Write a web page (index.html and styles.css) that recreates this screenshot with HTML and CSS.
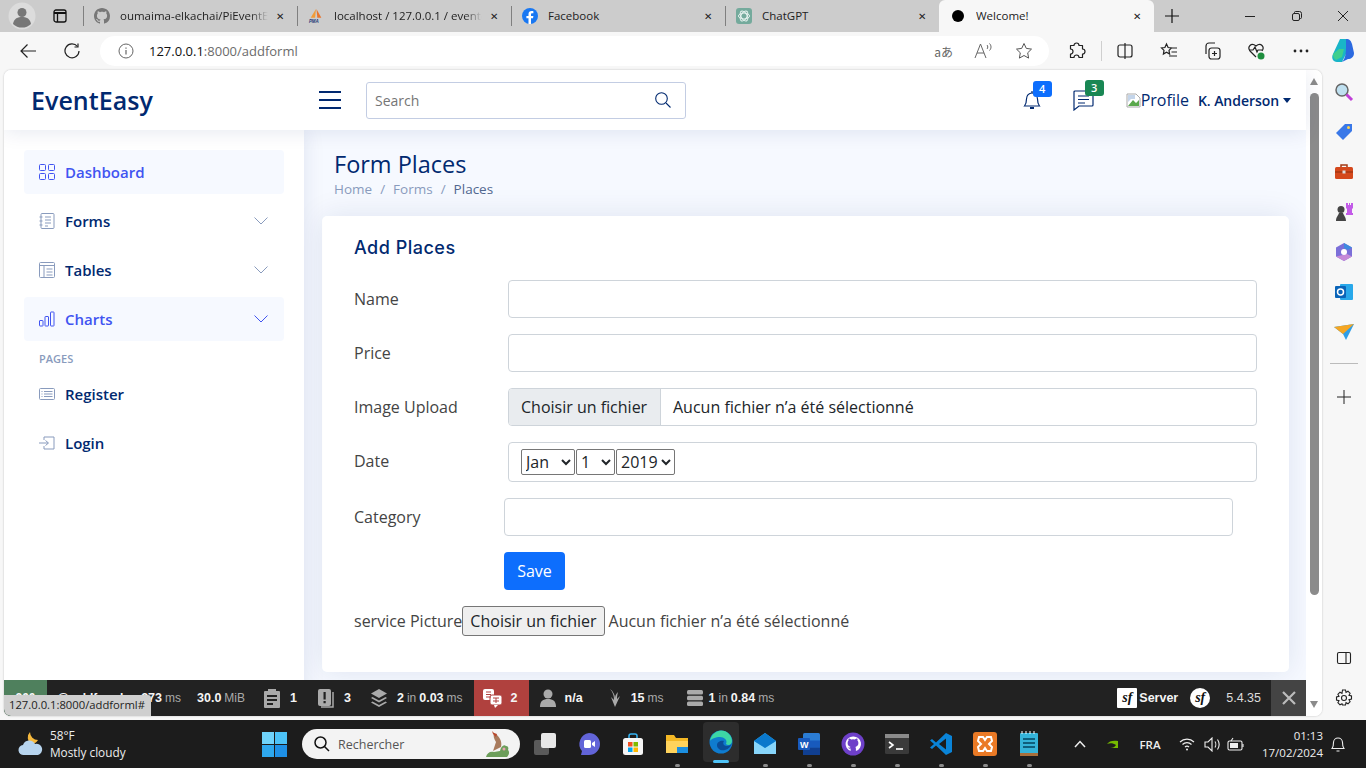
FILE: index.html
```html
<!DOCTYPE html>
<html lang="fr">
<head>
  <meta charset="UTF-8" />
  <meta name="viewport" content="width=device-width, initial-scale=1.0" />
  <title>Welcome!</title>
  <link rel="stylesheet" href="styles.css">
</head>
<body>

  <!-- barre des onglets -->
  <div class="tabstrip">
    <div class="tab-lead">
      <span class="avatar">
        <svg width="28" height="28" viewBox="0 0 28 28"><circle cx="14" cy="14" r="13.5" fill="#dcdcdc"/><circle cx="14" cy="10.5" r="4.5" fill="#777"/><path d="M5 22c1-6 5-7 9-7s8 1 9 7a13 13 0 0 1-18 0z" fill="#777"/></svg>
      </span>
      <svg class="workspace" width="16" height="16" viewBox="0 0 16 16" fill="none" stroke="#111" stroke-width="1.3"><rect x="2" y="2" width="12" height="12" rx="2"/><path d="M2 5h12" stroke-width="2"/><path d="M5.500 5v9"/></svg>
    </div>
    <div class="tab">
      <svg class="favicon" width="16" height="16" viewBox="0 0 16 16"><path fill="#777" d="M8 0C3.580 0 0 3.580 0 8c0 3.540 2.290 6.530 5.470 7.590.4.070.55-.17.55-.38 0-.19-.01-.82-.01-1.490-2.010.37-2.530-.49-2.690-.94-.09-.23-.48-.94-.82-1.130-.28-.15-.68-.52-.01-.53.63-.01 1.080.58 1.230.82.720 1.210 1.870.87 2.330.66.070-.52.280-.87.510-1.070-1.780-.2-3.640-.89-3.640-3.950 0-.87.310-1.590.820-2.150-.08-.2-.36-1.020.08-2.120 0 0 .670-.21 2.200.82.640-.18 1.320-.27 2-.27s1.360.09 2 .27c1.530-1.040 2.200-.82 2.200-.82.440 1.100.160 1.920.080 2.120.510.560.820 1.270.820 2.150 0 3.070-1.870 3.750-3.650 3.950.290.250.540.730.540 1.480 0 1.070-.01 1.930-.01 2.200 0 .210.150.460.550.380A8.010 8.010 0 0 0 16 8c0-4.420-3.580-8-8-8z"/></svg>
      <span class="tab-title fade">oumaima-elkachai/PiEventEa</span>
      <span class="tab-close">✕</span>
    </div>
    <div class="tab">
      <svg class="favicon" width="18" height="16" viewBox="0 0 18 16"><path d="M9 0L3 10h5z" fill="#f29b38"/><path d="M9.500 0L15 10h-4.500z" fill="#e8742c"/><text x="1" y="15.500" class="pma-text">PMA</text></svg>
      <span class="tab-title fade">localhost / 127.0.0.1 / evente</span>
      <span class="tab-close">✕</span>
    </div>
    <div class="tab">
      <svg class="favicon" width="16" height="16" viewBox="0 0 16 16"><circle cx="8" cy="8" r="8" fill="#1877f2"/><path d="M11 10.300l.4-2.300H9V6.500c0-.700.300-1.200 1.300-1.200h1.100V3.300S10.500 3.100 9.600 3.100C7.700 3.100 6.500 4.300 6.500 6.300V8H4.400v2.300h2.100V16h2.500v-5.700z" fill="#fff"/></svg>
      <span class="tab-title">Facebook</span>
      <span class="tab-close">✕</span>
    </div>
    <div class="tab">
      <svg class="favicon" width="16" height="16" viewBox="0 0 16 16"><rect width="16" height="16" rx="3" fill="#74aa9c"/><g fill="none" stroke="#e8f3f0" stroke-width="1"><ellipse cx="8" cy="8" rx="5.500" ry="3"/><ellipse cx="8" cy="8" rx="5.500" ry="3" transform="rotate(60 8 8)"/><ellipse cx="8" cy="8" rx="5.500" ry="3" transform="rotate(120 8 8)"/></g></svg>
      <span class="tab-title">ChatGPT</span>
      <span class="tab-close">✕</span>
    </div>
    <div class="tab tab-active">
      <span class="black-dot"></span>
      <span class="tab-title">Welcome!</span>
      <span class="tab-close">✕</span>
    </div>
    <span class="new-tab">
      <svg width="14" height="14" viewBox="0 0 14 14" stroke="#111" stroke-width="1.200"><path d="M7 0v14M0 7h14"/></svg>
    </span>
    <div class="win-controls">
      <svg width="10" height="10" viewBox="0 0 10 10" stroke="#222"><path d="M0 5.500h10"/></svg>
      <svg width="10" height="10" viewBox="0 0 10 10" fill="none" stroke="#222"><rect x=".5" y="2.500" width="7" height="7" rx="1.500"/><path d="M2.500 2V1.500a1 1 0 0 1 1-1h4a2 2 0 0 1 2 2v4a1 1 0 0 1-1 1H8"/></svg>
      <svg width="10" height="10" viewBox="0 0 10 10" stroke="#222"><path d="M0 0l10 10M10 0L0 10"/></svg>
    </div>
  </div>

  <!-- barre d'adresse -->
  <div class="toolbar">
    <span class="tool-slot">
      <svg width="16" height="16" viewBox="0 0 16 16" fill="none" stroke="#222" stroke-width="1.200"><path d="M16 8H1M7.500 1.500L1 8l6.500 6.500"/></svg>
    </span>
    <span class="tool-slot">
      <svg width="16" height="16" viewBox="0 0 16 16" fill="none" stroke="#222" stroke-width="1.200"><path d="M13.500 3.500A7 7 0 1 0 15 8"/><path d="M14 .5v3.500h-3.500"/></svg>
    </span>
    <div class="urlbar">
      <svg width="16" height="16" viewBox="0 0 16 16" fill="none" stroke="#666"><circle cx="8" cy="8" r="7"/><path d="M8 7v4.500M8 4.500v1.200" stroke-width="1.200"/></svg>
      <span class="url"><b>127.0.0.1</b>:8000/addforml</span>
      <span class="url-icons">
        <span class="url-translate">aあ</span>
        <svg width="20" height="18" viewBox="0 0 20 18" fill="none" stroke="#666"><path d="M1 16L6.500 2 12 16M3 11h7"/><path d="M13 3c1 1 1 3 0 4M15.500 1.500c2 2 2 5 0 7"/></svg>
        <svg width="18" height="18" viewBox="0 0 18 18" fill="none" stroke="#555"><path d="M9 1.500l2.300 4.900 5.200.7-3.800 3.700.9 5.300L9 13.500l-4.600 2.600.9-5.300L1.500 7.100l5.200-.7z"/></svg>
      </span>
    </div>
    <span class="tool-slot">
      <svg width="18" height="18" viewBox="0 0 18 18" fill="none" stroke="#222" stroke-width="1.200"><path d="M6 3.500a2.500 2.500 0 0 1 5 0h3.500V7a2.500 2.500 0 0 1 0 5v3.500H11a2.500 2.500 0 0 0-5 0H2.500V12a2.500 2.500 0 0 0 0-5V3.500z" stroke-linejoin="round"/></svg>
    </span>
    <span class="tool-sep"></span>
    <span class="tool-slot">
      <svg width="18" height="18" viewBox="0 0 18 18" fill="none" stroke="#222" stroke-width="1.200"><rect x="2" y="3" width="14" height="12" rx="2"/><path d="M9 1v16"/></svg>
    </span>
    <span class="tool-slot">
      <svg width="18" height="18" viewBox="0 0 18 18" fill="none" stroke="#222" stroke-width="1.200"><path d="M6.500 2l1.600 3.500 3.400.4-2.500 2.500.6 3.600-3.100-1.800-3.100 1.800.6-3.600L1.500 5.900l3.400-.4zM12 6h5M11.500 10h5.500M9 14h8"/></svg>
    </span>
    <span class="tool-slot">
      <svg width="18" height="18" viewBox="0 0 18 18" fill="none" stroke="#222" stroke-width="1.200"><rect x="5" y="6" width="11" height="11" rx="2.500"/><path d="M2 12V4a3 3 0 0 1 3-3h6M10.500 9v5M8 11.500h5"/></svg>
    </span>
    <span class="tool-slot">
      <svg width="20" height="20" viewBox="0 0 20 20" fill="none" stroke="#222" stroke-width="1.200"><path d="M9 16L3 10C0 6 4 1 9 5c5-4 9 1 6 5"/><path d="M2 9h4l2-3 2 5 1-2h4"/><circle cx="14" cy="15" r="3.500" fill="#1e8e3e" stroke="none"/></svg>
    </span>
    <span class="tool-slot">
      <svg width="16" height="4" viewBox="0 0 16 4" fill="#222"><circle cx="2" cy="2" r="1.400"/><circle cx="8" cy="2" r="1.400"/><circle cx="14" cy="2" r="1.400"/></svg>
    </span>
    <span class="tool-slot slot-copilot">
      <svg width="24" height="26" viewBox="0 0 24 26"><path d="M9 1h6l3 9-7 14H6C2 24 0 20 2 16z" fill="#19b5c8"/><path d="M15 1c4 0 5 2 6 5l2 9c0 4-3 6-6 6l-6 3c3-3 4-8 4-14z" fill="#2c6ae0"/><path d="M8 11h5l-2 8-6 3c-2-1-3-3-3-6z" fill="#3fcf8e"/></svg>
    </span>
  </div>

  <!-- fenêtre -->
  <div class="browser-body">
    <div class="viewport">
      <div class="page">
        <header class="topbar">
          <a class="logo" href="#">EventEasy</a>
          <svg class="toggle" width="22" height="18" viewBox="0 0 22 18" stroke="#012970" stroke-width="2"><path d="M0 1h22M0 9h22M0 17h22"/></svg>
          <div class="search-box">
            <span class="search-text">Search</span>
            <svg width="16" height="16" viewBox="0 0 16 16" fill="none" stroke="#012970" stroke-width="1.100"><circle cx="6.500" cy="6.500" r="5.800"/><path d="M11 11l4.500 4.500"/></svg>
          </div>
          <nav class="top-nav">
            <span class="top-icon icon-bell">
              <svg width="20" height="20" viewBox="0 0 20 20" fill="none" stroke="#012970" stroke-width="1.200"><path d="M2.500 16c1.500-2 2-3 2-7 0-3.500 2.500-6 5.500-6s5.500 2.500 5.500 6c0 4 .5 5 2 7z"/><path d="M10 1v2"/><path d="M8 18h4" stroke-width="2"/></svg>
              <span class="badge badge-blue">4</span>
            </span>
            <span class="top-icon icon-chat">
              <svg width="22" height="22" viewBox="0 0 22 22" fill="none" stroke="#012970" stroke-width="1.200"><path d="M3 2h17a1 1 0 0 1 1 1v13a1 1 0 0 1-1 1H7l-5 4V3a1 1 0 0 1 1-1z"/><path d="M6 7h11M6 10.500h11M6 14h7"/></svg>
              <span class="badge badge-green">3</span>
            </span>
            <span class="profile">
              <svg width="16" height="16" viewBox="0 0 16 16"><path d="M1 2h9l4 4v9H1z" fill="#fff" stroke="#a9a9a9"/><path d="M2 14l5-6 3 3 3-3v6z" fill="#5aa84c"/><path d="M2 3h7v4H5L2 10z" fill="#c4d5ea"/></svg>
              <span class="profile-alt">Profile</span>
              <span class="profile-name">K. Anderson</span>
              <span class="caret"></span>
            </span>
          </nav>
        </header>

        <div class="page-body">
          <aside class="sidebar">
            <a class="side-link active" href="#">
              <svg width="16" height="16" viewBox="0 0 16 16" fill="none" stroke="currentColor"><rect x=".5" y=".5" width="6" height="6" rx="1"/><rect x="9.500" y=".5" width="6" height="6" rx="1"/><rect x=".5" y="9.500" width="6" height="6" rx="1"/><rect x="9.500" y="9.500" width="6" height="6" rx="1"/></svg>
              <span>Dashboard</span>
            </a>
            <a class="side-link" href="#">
              <svg class="side-icon" width="16" height="16" viewBox="0 0 16 16" fill="none" stroke="#899bbd"><rect x="2" y=".5" width="13" height="15" rx="1"/><path d="M6 4h6M6 7h6M6 10h6M6 13h3M.5 4h3M.5 8h3M.5 12h3"/></svg>
              <span>Forms</span>
              <svg class="chev" width="16" height="10" viewBox="0 0 16 10" fill="none" stroke="#899bbd"><path d="M1.500 1.500L8 8l6.500-6.500"/></svg>
            </a>
            <a class="side-link" href="#">
              <svg class="side-icon" width="16" height="16" viewBox="0 0 16 16" fill="none" stroke="#899bbd"><rect x=".5" y=".5" width="15" height="15" rx="1"/><path d="M.5 3.500h15M5 3.500v12M7.500 7h6M7.500 10h6M7.500 13h6"/></svg>
              <span>Tables</span>
              <svg class="chev" width="16" height="10" viewBox="0 0 16 10" fill="none" stroke="#899bbd"><path d="M1.500 1.500L8 8l6.500-6.500"/></svg>
            </a>
            <a class="side-link active" href="#">
              <svg width="16" height="16" viewBox="0 0 16 16" fill="none" stroke="currentColor"><rect x=".5" y="9.500" width="3.500" height="5.500" rx=".5"/><rect x="6" y="5.500" width="3.500" height="9.500" rx=".5"/><rect x="11.500" y="1" width="3.500" height="14" rx=".5"/></svg>
              <span>Charts</span>
              <svg class="chev" width="16" height="10" viewBox="0 0 16 10" fill="none" stroke="currentColor"><path d="M1.500 1.500L8 8l6.500-6.500"/></svg>
            </a>
            <div class="side-heading">PAGES</div>
            <a class="side-link" href="#">
              <svg class="side-icon" width="16" height="16" viewBox="0 0 16 16" fill="none" stroke="#899bbd"><rect x=".5" y="2.500" width="15" height="11" rx="1"/><path d="M2.500 5.500h1M2.500 8h1M2.500 10.500h1M5 5.500h8.500M5 8h8.500M5 10.500h8.500"/></svg>
              <span>Register</span>
            </a>
            <a class="side-link" href="#">
              <svg class="side-icon" width="16" height="16" viewBox="0 0 16 16" fill="none" stroke="#899bbd"><path d="M5 5V2h10v12H5v-3M0 8h9M6.500 5.500L9.500 8l-3 2.500"/></svg>
              <span>Login</span>
            </a>
          </aside>

          <main class="content">
            <h1 class="page-title">Form Places</h1>
            <div class="crumbs">
              <span>Home</span><i>/</i><span>Forms</span><i>/</i><span class="crumb-here">Places</span>
            </div>

            <section class="card">
              <h2 class="card-title">Add Places</h2>

              <div class="form-row">
                <label class="form-label">Name</label>
                <div class="field"></div>
              </div>
              <div class="form-row">
                <label class="form-label">Price</label>
                <div class="field"></div>
              </div>
              <div class="form-row">
                <label class="form-label">Image Upload</label>
                <div class="field file-field">
                  <span class="file-btn">Choisir un fichier</span>
                  <span class="file-name">Aucun fichier n’a été sélectionné</span>
                </div>
              </div>
              <div class="form-row">
                <label class="form-label date-label">Date</label>
                <div class="field date-field">
                  <select class="sel-month"><option>Jan</option></select>
                  <select class="sel-day"><option>1</option></select>
                  <select class="sel-year"><option>2019</option></select>
                </div>
              </div>
              <div class="form-row row-narrow">
                <label class="form-label">Category</label>
                <div class="field"></div>
              </div>
              <div class="form-row row-narrow">
                <span class="form-label"></span>
                <button class="save-btn">Save</button>
              </div>
              <div class="native-file">
                <span>service Picture</span><span class="native-btn">Choisir un fichier</span><span class="native-name">Aucun fichier n’a été sélectionné</span>
              </div>
            </section>
          </main>
        </div>
      </div>

      <div class="scrollbar">
        <span class="arrow-up"></span>
        <span class="thumb"></span>
        <span class="arrow-down"></span>
      </div>

      <!-- barre de debug symfony -->
      <div class="sf-bar">
        <span class="sf-status">200</span>
        <span class="sf-item sf-request"><em>@ addforml</em><b>273</b><small>ms</small></span>
        <span class="sf-item sf-memory"><b>30.0</b><small>MiB</small></span>
        <span class="sf-item sf-form">
          <svg width="18" height="20" viewBox="0 0 18 20"><path fill="#aaa" d="M2 3h3V1h8v2h3a1 1 0 0 1 1 1v15a1 1 0 0 1-1 1H2a1 1 0 0 1-1-1V4a1 1 0 0 1 1-1z"/><path fill="#222" d="M4 7h10v2H4zM4 11h10v2H4zM4 15h6v2H4z"/></svg>
          <b>1</b>
        </span>
        <span class="sf-item sf-ex">
          <svg width="18" height="20" viewBox="0 0 18 20"><rect x="1" y="1" width="13" height="17" rx="2" fill="#aaa"/><path d="M16 4v15H4" fill="none" stroke="#aaa" stroke-width="1.500"/><path fill="#222" d="M6.500 4h2.200v7.500H6.500zM6.500 13h2.200v2.300H6.500z"/></svg>
          <b>3</b>
        </span>
        <span class="sf-item sf-cache">
          <svg width="18" height="20" viewBox="0 0 18 20" fill="#aaa"><path d="M9 1l8 4.500L9 10 1 5.500z"/><path d="M2.500 9L9 12.500 15.500 9 17 10l-8 4.500L1 10z"/><path d="M2.500 13.500L9 17l6.500-3.500L17 14.500 9 19l-8-4.500z"/></svg>
          <b>2</b><small>in</small><b>0.03</b><small>ms</small>
        </span>
        <span class="sf-item sf-trans">
          <svg width="22" height="22" viewBox="0 0 22 22"><rect x="1" y="2" width="11" height="11" rx="2" fill="#fff"/><rect x="8" y="8" width="12" height="10" rx="2" fill="#fff" stroke="#b0413e"/><path d="M12 18l1 3 3-3z" fill="#fff"/><path d="M4 5h5M4 7.500h5M4 10h5M11 11h6M11 14h6M14 11v5" stroke="#b0413e" fill="none"/></svg>
          <b>2</b>
        </span>
        <span class="sf-item sf-user">
          <svg width="16" height="18" viewBox="0 0 16 18" fill="#aaa"><circle cx="8" cy="5" r="4.500"/><path d="M0 18c0-6 3-8 8-8s8 2 8 8z"/></svg>
          <b>n/a</b>
        </span>
        <span class="sf-item sf-time">
          <svg width="14" height="20" viewBox="0 0 14 20" fill="#aaa"><path d="M2 1c3 3 4 7 4 11l-3-3 4 10 5-11-3 3c0-3 .500-5 1-7-2 2-3 4-3 6C7 7 5 3 2 1z"/></svg>
          <b>15</b><small>ms</small>
        </span>
        <span class="sf-item sf-db">
          <svg width="18" height="18" viewBox="0 0 18 18" fill="#aaa"><rect x="1" y="1" width="16" height="4.500" rx="1.500"/><rect x="1" y="6.800" width="16" height="4.500" rx="1.500"/><rect x="1" y="12.600" width="16" height="4.500" rx="1.500"/></svg>
          <b>1</b><small>in</small><b>0.84</b><small>ms</small>
        </span>
        <span class="sf-right">
          <span class="sf-server"><span class="sf-logo">sf</span><b>Server</b></span>
          <span class="sf-version"><span class="sf-logo sf-round">sf</span><span>5.4.35</span></span>
          <span class="sf-hide">
            <svg width="14" height="14" viewBox="0 0 14 14" stroke="#bbb" stroke-width="2.200"><path d="M1 1l12 12M13 1L1 13"/></svg>
          </span>
        </span>
      </div>

      <div class="link-status">127.0.0.1:8000/addforml#</div>
    </div>

    <!-- barre latérale du navigateur -->
    <div class="edge-rail">
      <svg width="20" height="20" viewBox="0 0 20 20"><circle cx="8" cy="8" r="6" fill="#bfe0f0" stroke="#666" stroke-width="1.500"/><path d="M12.500 12.500L18 18" stroke="#c040d8" stroke-width="3"/></svg>
      <svg width="20" height="20" viewBox="0 0 20 20"><path d="M2 11L11 2h7v7l-9 9z" fill="#3a78e8"/><circle cx="14.500" cy="5.500" r="1.500" fill="#ffd34d"/></svg>
      <svg width="20" height="20" viewBox="0 0 20 20"><path d="M7 5V3h6v2" fill="none" stroke="#a33a14" stroke-width="1.500"/><rect x="1" y="5" width="18" height="12" rx="1.500" fill="#d4481c"/><path d="M1 10h18" stroke="#8e2e0e"/><rect x="8.500" y="8.500" width="3" height="3" fill="#ddd"/></svg>
      <svg width="20" height="20" viewBox="0 0 20 20"><circle cx="7" cy="7.500" r="3.500" fill="#444"/><path d="M2 19c0-4 2-5 3-8h4c1 3 3 4 3 8z" fill="#444"/><path d="M12 1h2v2h1V1h1v2h1V1h2v5l-1 1v4h1v2h-7v-2h1V7l-1-1z" fill="#c35be8"/></svg>
      <svg width="20" height="20" viewBox="0 0 20 20"><path d="M10 1l8 4.500v9L10 19l-8-4.500v-9z" fill="#7b6fd8"/><path d="M10 1l8 4.500-4 2.500-4-2z" fill="#3f8ae0"/><path d="M2 14.500L10 19l8-4.500-5-2.500z" fill="#c68ad8"/><circle cx="10" cy="10" r="3" fill="#fff"/></svg>
      <svg width="20" height="20" viewBox="0 0 20 20"><rect x="6" y="2" width="13" height="16" rx="1" fill="#28a8ea"/><rect x="1" y="4" width="11" height="12" rx="1" fill="#0a64b8"/><circle cx="6.500" cy="10" r="3" fill="none" stroke="#fff" stroke-width="1.500"/></svg>
      <svg width="20" height="20" viewBox="0 0 20 20"><path d="M0 5l20-3-8 16-3-6z" fill="#2f9ee8"/><path d="M0 5l20-3L9 12z" fill="#f5a623"/></svg>
      <span class="rail-sep"></span>
      <svg width="14" height="14" viewBox="0 0 14 14" stroke="#222"><path d="M7 0v14M0 7h14"/></svg>
      <span class="rail-bottom">
        <svg width="16" height="16" viewBox="0 0 16 16" fill="none" stroke="#222" stroke-width="1.100"><rect x="1.500" y="2.500" width="13" height="11" rx="1.500"/><path d="M10 2.500v11"/></svg>
        <svg width="18" height="18" viewBox="0 0 18 18" fill="none" stroke="#222" stroke-width="1.100"><circle cx="9" cy="9" r="2.500"/><path d="M7.500 1h3l.5 2.300 2-1.100 2.100 2.100-1.100 2 2.500.7v3l-2.500.7 1.100 2-2.100 2.100-2-1.100-.5 2.300h-3L7 14.700l-2 1.100L2.900 13.700l1.100-2L1.500 11V8l2.500-.7-1.100-2L5 3.200l2 1.100z"/></svg>
      </span>
    </div>
  </div>

  <!-- barre des tâches -->
  <div class="taskbar">
    <div class="weather">
      <svg width="28" height="28" viewBox="0 0 28 28"><path d="M13 2a8 8 0 0 0 1 12 8 8 0 0 0 7-4A8 8 0 0 1 13 2z" fill="#f5b83d"/><path d="M7 25a5 5 0 0 1-1-10 6.500 6.500 0 0 1 12-1 5.500 5.500 0 0 1 3 11z" fill="#b7d4ee"/></svg>
      <div class="weather-text">
        <span>58°F</span>
        <span>Mostly cloudy</span>
      </div>
    </div>
    <span class="start">
      <svg width="25" height="25" viewBox="0 0 25 25"><rect width="12" height="12" fill="#6fd3fb"/><rect x="13" width="12" height="12" fill="#4cc2f7"/><rect y="13" width="12" height="12" fill="#2ea8ee"/><rect x="13" y="13" width="12" height="12" fill="#1e90e6"/></svg>
    </span>
    <div class="task-search">
      <svg width="16" height="16" viewBox="0 0 16 16" fill="none" stroke="#111" stroke-width="1.500"><circle cx="6.500" cy="6.500" r="5.500"/><path d="M10.500 10.500L15 15"/></svg>
      <span>Rechercher</span>
      <svg class="bird" width="30" height="28" viewBox="0 0 30 28"><path d="M11 21l3-9c-2-3-3-6-2-9l3 2c4 4 5 8 4 12z" fill="#a87a5c"/><path d="M12 3l-2-2 1 3 3 3 1-3z" fill="#b9482c"/><path d="M4 27c1-4 4-6 8-5l6-1c1-5 4-7 6-5 2 0 3 2 2 4 2 2 1 5-1 7z" fill="#6c9e5a"/><circle cx="22" cy="19" r="1.500" fill="#e8a3b0"/></svg>
    </div>
    <div class="task-apps">
      <span class="task-app no-dot">
        <svg width="24" height="24" viewBox="0 0 24 24"><rect x="1" y="8" width="15" height="15" rx="2" fill="#5a5a5a"/><rect x="8" y="1" width="15" height="15" rx="2" fill="#e8e8e8"/></svg>
      </span>
      <span class="task-app no-dot">
        <svg width="24" height="24" viewBox="0 0 24 24"><path d="M12 1a11 11 0 0 1 0 22H4l1-4A11 11 0 0 1 12 1z" fill="#6264d8"/><rect x="7" y="8" width="7" height="8" rx="1.500" fill="#fff"/><path d="M15 11l3-2v6l-3-2z" fill="#fff"/></svg>
      </span>
      <span class="task-app no-dot">
        <svg width="24" height="24" viewBox="0 0 24 24"><path d="M8 6V4a2 2 0 0 1 2-2h4a2 2 0 0 1 2 2v2" fill="none" stroke="#35b4f4" stroke-width="1.500"/><rect x="2" y="6" width="20" height="17" rx="2.500" fill="#f5f5f5"/><rect x="7" y="10" width="4.500" height="4.500" fill="#f25022"/><rect x="12.500" y="10" width="4.500" height="4.500" fill="#7fba00"/><rect x="7" y="15.500" width="4.500" height="4.500" fill="#00a4ef"/><rect x="12.500" y="15.500" width="4.500" height="4.500" fill="#ffb900"/></svg>
      </span>
      <span class="task-app">
        <svg width="24" height="24" viewBox="0 0 24 24"><path d="M1 3h8l2 3h12v15H1z" fill="#f4b825"/><rect x="1" y="9" width="22" height="12" fill="#ffd35c"/><rect x="12" y="15" width="11" height="6" fill="#1b8fe0"/></svg>
      </span>
      <span class="task-app app-active">
        <svg width="24" height="24" viewBox="0 0 24 24"><circle cx="12" cy="12" r="11.500" fill="#0f7ccf"/><path d="M1 11C2 4 8 .5 12 .5c6 0 11 5 11 10.500 0 4-4 5-6 3 2-4-2-7-6-7-4 0-9 2-10 4z" fill="#3dd6a5"/><path d="M8 15c0 4 4 6 8 5 4-1 6-4 7-7-1 3-6 4-8 2-1-1-1-3 0-4-3-1-7 1-7 4z" fill="#0a4c98"/></svg>
      </span>
      <span class="task-app">
        <svg width="24" height="24" viewBox="0 0 24 24"><path d="M1 9l11-8 11 8v13H1z" fill="#3db4f0"/><path d="M1 9l11 7 11-7v13H1z" fill="#87d5fa"/><path d="M1 9l11 7 11-7-11-8z" fill="#0a78cc"/></svg>
      </span>
      <span class="task-app">
        <svg width="24" height="24" viewBox="0 0 24 24"><rect x="6" y="1" width="17" height="22" rx="1.500" fill="#2b7cd3"/><rect x="6" y="8.500" width="17" height="7" fill="#185abd"/><rect x="6" y="15.500" width="17" height="7.500" fill="#103f91"/><rect x="1" y="6" width="12" height="12" rx="1" fill="#185abd"/><text x="3" y="15.500" class="word-text">W</text></svg>
      </span>
      <span class="task-app">
        <svg width="24" height="24" viewBox="0 0 24 24"><circle cx="12" cy="12" r="11.500" fill="#6e40c9"/><path d="M12 4.500a7.500 7.500 0 0 0-2.400 14.600v-2.500c-2 .4-2.500-1-2.500-1 2 .5 2.500-.5 2.500-.5-2-1-3-2-3-4.100 0-1 .4-1.800 1-2.400-.1-.3-.3-1.100.1-2.100 0 0 1-.3 2.500.9a7 7 0 0 1 3.600 0c1.500-1.200 2.500-.9 2.500-.9.400 1 .2 1.800.1 2.100.6.600 1 1.400 1 2.400 0 2.100-1 3.100-3 4.100.3.500.5.900.5 1.700v2.300A7.500 7.500 0 0 0 12 4.500z" fill="#fff"/></svg>
      </span>
      <span class="task-app">
        <svg width="24" height="24" viewBox="0 0 24 24" fill="none"><rect x="0" y="2" width="24" height="20" rx="1.500" fill="#3a3a3a"/><rect x="0" y="2" width="24" height="4" fill="#8a8a8a"/><path d="M4 10l4 3-4 3" stroke="#fff" stroke-width="1.600"/><path d="M11 17h7" stroke="#fff" stroke-width="1.600"/></svg>
      </span>
      <span class="task-app">
        <svg width="24" height="24" viewBox="0 0 24 24"><path d="M17 1l6 3v16l-6 3L7 13.500 3 17l-2-1.500L5 12 1 8.500 3 7l4 3.500z" fill="#0a84d8"/><path d="M17 6.500v11L10 12z" fill="#1c1c1c"/></svg>
      </span>
      <span class="task-app">
        <svg width="24" height="24" viewBox="0 0 24 24"><rect width="24" height="24" rx="3" fill="#ea7a26"/><path d="M6 5h4l2 3 2-3h4l1 4-3 3 3 3-1 4h-4l-2-3-2 3H6l-1-4 3-3-3-3z" fill="none" stroke="#fff" stroke-width="2"/></svg>
      </span>
      <span class="task-app">
        <svg width="22" height="26" viewBox="0 0 22 26"><rect x="2" y="2" width="18" height="23" rx="1" fill="#35b3d9"/><rect x="2" y="22" width="18" height="3" fill="#a86f3c"/><path d="M5 8h12M5 12h12M5 16h12" stroke="#0f5f7d" stroke-width="2"/><path d="M4 0v3M8 0v3M12 0v3M16 0v3" stroke="#fff"/></svg>
      </span>
    </div>
    <div class="tray">
      <svg width="12" height="8" viewBox="0 0 12 8" fill="none" stroke="#eee" stroke-width="1.500"><path d="M1 7l5-5.500L11 7"/></svg>
      <svg width="14" height="12" viewBox="0 0 14 12"><path d="M3 6c2-3 6-4 11-3v7H6c3 0 5-1 6-3-3-2-6-2-9-1z" fill="#76b900"/></svg>
      <span class="tray-lang">FRA</span>
      <svg width="16" height="14" viewBox="0 0 16 14" fill="none" stroke="#eee" stroke-width="1.200"><path d="M1 5a10 10 0 0 1 14 0M3.500 7.500a6.500 6.500 0 0 1 9 0M6 10a3 3 0 0 1 4 0"/><circle cx="8" cy="12.500" r="1" fill="#eee" stroke="none"/></svg>
      <svg width="17" height="15" viewBox="0 0 17 15" fill="none" stroke="#eee" stroke-width="1.100"><path d="M1 5h3l4-4v13l-4-4H1zM11 4.500c1 1.500 1 4.500 0 6M13.500 2.500c2 3 2 7 0 10"/></svg>
      <svg width="18" height="15" viewBox="0 0 18 15" fill="none" stroke="#eee" stroke-width="1.100"><rect x="1" y="4" width="14" height="9" rx="1.500"/><rect x="3" y="6" width="8" height="5" fill="#eee" stroke="none"/><path d="M16 7v3M4 4l2-3"/></svg>
      <div class="clock">
        <span>01:13</span>
        <span>17/02/2024</span>
      </div>
      <svg width="14" height="16" viewBox="0 0 14 16" fill="none" stroke="#eee" stroke-width="1.100"><path d="M1 12.500c1-1.500 1.500-2 1.500-6a4.500 4.500 0 0 1 9 0c0 4 .5 4.500 1.500 6zM5.500 15h3"/></svg>
    </div>
  </div>

</body>
</html>
```

FILE: styles.css
```css
* {
  box-sizing: border-box;
}

html,
body {
  margin: 0;
  height: 768px;
  overflow: hidden;
}

body {
  display: flex;
  flex-direction: column;
  font-family: "Open Sans", sans-serif;
  font-size: 16px;
  color: #444;
  background-color: #f7f7f7;
}

a {
  text-decoration: none;
}

/* tabs */
.tabstrip {
  height: 32px;
  display: flex;
  background-color: #cccccc;
  flex-shrink: 0;
}

.tab-lead {
  width: 83px;
  display: flex;
  align-items: center;
  padding-left: 8px;
}

.avatar {
  display: flex;
  width: 28px;
  height: 28px;
}

.workspace {
  margin-left: 16px;
}

.tab {
  width: 214px;
  height: 31px;
  display: flex;
  align-items: center;
  padding: 0 9px 0 11px;
  font-size: 11.500px;
  color: #222;
  position: relative;
}

.tab::before {
  content: "";
  position: absolute;
  left: 0;
  top: 6px;
  width: 1px;
  height: 20px;
  background-color: #7f7f7f;
}

.favicon {
  flex-shrink: 0;
  width: 16px;
}

.tab-title {
  margin-left: 10px;
  flex: 1;
  white-space: nowrap;
  overflow: hidden;
}

.fade {
  -webkit-mask-image: linear-gradient(to right, #000 88%, transparent);
  mask-image: linear-gradient(to right, #000 88%, transparent);
}

.tab-close {
  margin-left: 8px;
  font-size: 10px;
  width: 12px;
  color: #222;
}

.tab-active {
  height: 32px;
  padding-bottom: 1px;
  background-color: #f7f7f7;
  border-radius: 6px 6px 0 0;
  padding-left: 13px;
  width: 215px;
}

.tab-active::before {
  display: none;
}

.black-dot {
  width: 12px;
  height: 12px;
  border-radius: 50%;
  background-color: #000;
  flex-shrink: 0;
  margin-right: 2px;
}

.pma-text {
  font-family: "Liberation Sans", sans-serif;
  font-size: 5px;
  font-weight: bold;
  font-style: italic;
  fill: #1f3a78;
}

.new-tab {
  width: 36px;
  display: flex;
  align-items: center;
  justify-content: center;
}

.win-controls {
  margin-left: auto;
  width: 140px;
  display: flex;
  justify-content: space-between;
  align-items: center;
  padding: 0 18px 0 19px;
}

/* address bar */
.toolbar {
  height: 38px;
  display: flex;
  align-items: center;
  padding-left: 6px;
  flex-shrink: 0;
  background-color: #f7f7f7;
}

.tool-slot {
  width: 44px;
  display: flex;
  justify-content: center;
  align-items: center;
}

.tool-sep {
  width: 1px;
  height: 20px;
  margin: 0 1.500px;
  background-color: #cfcfcf;
}

.slot-copilot {
  margin-left: -2px;
}

.urlbar {
  width: 949px;
  height: 30px;
  margin: 0 6px;
  background-color: #fff;
  border-radius: 15px;
  display: flex;
  align-items: center;
  padding: 0 16px 0 18px;
}

.url {
  margin-left: 15px;
  font-size: 13px;
  color: #6b6b6b;
}

.url b {
  font-weight: 400;
  color: #111;
}

.url-icons {
  margin-left: auto;
  display: flex;
  align-items: center;
  gap: 21px;
}

.url-translate {
  font-family: "Noto Sans CJK JP", "Open Sans", sans-serif;
  font-size: 12px;
  color: #666;
  margin-right: 0;
}

/* window */
.browser-body {
  height: 650px;
  display: flex;
  padding-left: 4px;
  padding-bottom: 4px;
  flex-shrink: 0;
}

.viewport {
  width: 1318px;
  height: 646px;
  position: relative;
  display: flex;
  overflow: hidden;
  border-radius: 7px;
  background-color: #fff;
  box-shadow: 0 0 2px rgba(0, 0, 0, 0.25);
}

.page {
  width: 1302px;
  display: flex;
  flex-direction: column;
  background-color: #f6f9ff;
}

/* top bar */
.topbar {
  height: 60px;
  display: flex;
  align-items: center;
  padding-left: 27px;
  background-color: #fff;
  box-shadow: 0 2px 20px rgba(1, 41, 112, 0.1);
  position: relative;
  z-index: 2;
  flex-shrink: 0;
}

.logo {
  width: 288px;
  font-size: 25px;
  font-weight: 650;
  letter-spacing: 0.05px;
  color: #012970;
}

.toggle {
  flex-shrink: 0;
}

.search-box {
  width: 320px;
  height: 37px;
  margin-left: 25px;
  display: flex;
  align-items: center;
  justify-content: space-between;
  padding: 0 14px 0 8px;
  border: 1px solid #c3cde3;
  border-radius: 3px;
}

.search-text {
  font-size: 14px;
  color: #757575;
}

.top-nav {
  margin-left: auto;
  display: flex;
  align-items: center;
  padding-right: 15px;
}

.top-icon {
  position: relative;
  display: flex;
}

.icon-bell {
  margin-right: 30px;
}

.icon-chat {
  margin-right: 32px;
}

.badge {
  position: absolute;
  top: -9px;
  width: 19px;
  height: 16px;
  border-radius: 3px;
  color: #fff;
  font-size: 11px;
  font-weight: 600;
  line-height: 16px;
  text-align: center;
}

.badge-blue {
  left: 11px;
  background-color: #0d6efd;
}

.badge-green {
  left: 13px;
  background-color: #198754;
}

.profile {
  display: flex;
  align-items: center;
  color: #012970;
}

.profile-alt {
  font-size: 16px;
  margin-left: -1px;
  color: #012970;
}

.profile-name {
  font-size: 14px;
  font-weight: 550;
  margin-left: 9px;
  letter-spacing: -0.05px;
}

.caret {
  margin-left: 4px;
  border-top: 5px solid #012970;
  border-left: 4px solid transparent;
  border-right: 4px solid transparent;
}

/* sidebar */
.page-body {
  flex: 1;
  display: flex;
  min-height: 0;
}

.sidebar {
  width: 300px;
  padding: 20px;
  background-color: #fff;
  box-shadow: 0 0 20px rgba(1, 41, 112, 0.1);
  position: relative;
  z-index: 1;
  flex-shrink: 0;
}

.side-link {
  height: 44px;
  margin-bottom: 5px;
  display: flex;
  align-items: center;
  gap: 10px;
  padding: 0 15px;
  border-radius: 4px;
  font-size: 15px;
  font-weight: 550;
  color: #012970;
}

.side-link.active {
  background-color: #f6f9ff;
  color: #4154f1;
}

.chev {
  margin-left: auto;
}

.side-heading {
  font-size: 11px;
  font-weight: 600;
  color: #899bbd;
  line-height: 13px;
  padding: 6px 15px 0;
  margin-bottom: 7px;
}

/* content */
.content {
  flex: 1;
  padding: 20px 17px 0 18px;
  min-width: 0;
}

.page-title {
  margin: 0 0 0 12px;
  font-size: 23.500px;
  font-weight: 500;
  line-height: 29px;
  color: #012970;
}

.crumbs {
  margin-left: 12px;
  margin-bottom: 16px;
  font-size: 13.500px;
  line-height: 21px;
  font-weight: 500;
  color: #899bbd;
}

.crumbs i {
  font-style: normal;
  margin: 0 8px;
}

.crumb-here {
  color: #51678f;
}

.card {
  height: 456px;
  padding: 20px 32px 0;
  background-color: #fff;
  border-radius: 5px;
  box-shadow: 0 0 30px rgba(1, 41, 112, 0.1);
}

.card-title {
  margin: 0 0 22px;
  padding-top: 1px;
  height: 22px;
  font-family: "Inter", sans-serif;
  font-size: 18px;
  font-weight: 500;
  line-height: 22px;
  color: #012970;
  letter-spacing: 0.5px;
}

.form-row {
  display: flex;
  align-items: center;
  margin-bottom: 16px;
}

.form-label {
  width: 154px;
  flex-shrink: 0;
}

.date-label {
  margin-bottom: 2px;
}

.field {
  flex: 1;
  min-height: 38px;
  background-color: #fff;
  border: 1px solid #ced4da;
  border-radius: 4px;
}

.row-narrow .form-label {
  width: 150px;
}

.row-narrow .field {
  flex: none;
  width: 729px;
}

.file-field {
  display: flex;
  align-items: stretch;
  overflow: hidden;
}

.file-btn {
  display: flex;
  align-items: center;
  width: 152px;
  padding-left: 12px;
  background-color: #e9ecef;
  border-right: 1px solid #ced4da;
  color: #212529;
}

.file-name {
  display: flex;
  align-items: center;
  padding-left: 12px;
  color: #212529;
}

.date-field {
  height: 40px;
  display: flex;
  align-items: center;
  gap: 1px;
  padding-left: 12px;
}

.date-field select {
  height: 26px;
  font-family: "Open Sans", sans-serif;
  font-size: 16px;
  color: #212529;
  background-color: #fff;
  border: 1px solid #767676;
  border-radius: 2px;
  padding: 0;
}

.sel-month {
  width: 54px;
}

.sel-day {
  width: 39px;
}

.sel-year {
  width: 59px;
}

.save-btn {
  width: 61px;
  height: 38px;
  border: 0;
  border-radius: 4px;
  background-color: #0d6efd;
  color: #fff;
  font-family: "Open Sans", sans-serif;
  font-size: 16px;
}

.native-file {
  display: flex;
  align-items: center;
  color: #444;
}

.native-btn {
  height: 30px;
  display: flex;
  align-items: center;
  padding: 0 7px;
  background-color: #efefef;
  border: 1px solid #767676;
  border-radius: 3px;
  color: #212529;
}

.native-name {
  margin-left: 4px;
}

/* scrollbar */
.scrollbar {
  width: 16px;
  position: relative;
  background-color: #fff;
}

.thumb {
  position: absolute;
  left: 4px;
  top: 23px;
  width: 9px;
  height: 502px;
  border-radius: 5px;
  background-color: #8b8b8b;
}

.arrow-up,
.arrow-down {
  position: absolute;
  left: 4px;
  border-left: 4.500px solid transparent;
  border-right: 4.500px solid transparent;
}

.arrow-up {
  top: 8px;
  border-bottom: 7px solid #8b8b8b;
}

.arrow-down {
  bottom: 8px;
  border-top: 7px solid #8b8b8b;
}

/* debug toolbar */
.sf-bar {
  position: absolute;
  left: 0;
  bottom: 0;
  width: 1302px;
  height: 36px;
  display: flex;
  align-items: stretch;
  background-color: #222;
  color: #f5f5f5;
  font-family: "Liberation Sans", sans-serif;
  font-size: 12px;
  z-index: 3;
}

.sf-status {
  width: 43px;
  display: flex;
  align-items: center;
  justify-content: center;
  background-color: #4f805d;
  font-weight: 700;
}

.sf-item {
  display: flex;
  align-items: center;
  gap: 3px;
  padding: 0 9px;
  white-space: nowrap;
}

.sf-item b {
  font-weight: 700;
  font-size: 12.500px;
}

.sf-item small {
  font-size: 12px;
  color: #aaa;
}

.sf-item em {
  font-style: normal;
  font-weight: 700;
  margin-right: 4px;
  margin-left: 1px;
  width: 80px;
}

.sf-request {
  width: 143px;
}

.sf-memory {
  margin-left: -2px;
}

.sf-item svg {
  margin-right: 6px;
}

.sf-form {
  margin-left: 0;
}

.sf-ex {
  margin-left: 2px;
}

.sf-cache {
  margin-left: 1px;
}

.sf-trans {
  background-color: #b0413e;
  width: 55px;
  margin-left: 2px;
  padding: 0 8px;
}

.sf-trans svg {
  margin-right: 4px;
}

.sf-user {
  margin-left: 2px;
}

.sf-time {
  margin-left: 7px;
}

.sf-db {
  margin-left: 4px;
}

.sf-db svg {
  margin-right: 2px;
}

.sf-right {
  margin-left: auto;
  display: flex;
  align-items: stretch;
}

.sf-server,
.sf-version {
  display: flex;
  align-items: center;
  gap: 2px;
}

.sf-server b {
  font-size: 12.500px;
}

.sf-version {
  margin-left: 12px;
  gap: 16px;
  font-size: 12.500px;
  color: #ddd;
  margin-right: 10px;
}

.sf-logo {
  width: 20px;
  height: 20px;
  display: flex;
  align-items: center;
  justify-content: center;
  background-color: #fff;
  color: #111;
  font-family: "Liberation Serif", serif;
  font-style: italic;
  font-weight: 700;
  font-size: 14px;
  border-radius: 1px;
}

.sf-round {
  border-radius: 50%;
}

.sf-hide {
  width: 35px;
  display: flex;
  align-items: center;
  justify-content: center;
  background-color: #444;
}

.link-status {
  position: absolute;
  left: 0;
  bottom: 0;
  height: 21px;
  padding: 0 6px 0 5px;
  background-color: #cfcfcf;
  border-radius: 0 3px 0 7px;
  color: #222;
  font-size: 11.250px;
  line-height: 20px;
  z-index: 4;
}

/* browser side rail */
.edge-rail {
  width: 44px;
  height: 646px;
  padding-top: 12px;
  display: flex;
  flex-direction: column;
  align-items: center;
  gap: 20px;
  background-color: #f7f7f7;
}

.rail-sep {
  width: 28px;
  height: 1px;
  background-color: #bbb;
  margin: 1px 0 6px;
}

.rail-bottom {
  margin-top: auto;
  margin-bottom: 9px;
  display: flex;
  flex-direction: column;
  align-items: center;
  gap: 23px;
}

/* taskbar */
.taskbar {
  height: 48px;
  display: flex;
  align-items: center;
  background-color: #1c1c1c;
  color: #eee;
  flex-shrink: 0;
}

.weather {
  width: 250px;
  display: flex;
  align-items: center;
  padding-left: 17px;
  gap: 5px;
}

.weather-text {
  display: flex;
  flex-direction: column;
  font-size: 11.800px;
  line-height: 17px;
}

.start {
  width: 48px;
  display: flex;
  justify-content: center;
}

.task-search {
  width: 218px;
  height: 30px;
  margin-left: 4px;
  display: flex;
  align-items: center;
  padding: 0 8px 0 12px;
  background-color: #f3f3f3;
  border-radius: 15px;
  color: #555;
  font-size: 12.500px;
  gap: 8px;
}

.bird {
  margin-left: auto;
}

.task-apps {
  margin-left: 3px;
  display: flex;
}

.task-app {
  width: 44px;
  height: 44px;
  display: flex;
  align-items: center;
  justify-content: center;
  position: relative;
}

.task-app::after {
  content: "";
  position: absolute;
  bottom: -1px;
  left: 20px;
  width: 5px;
  height: 3px;
  border-radius: 2px;
  background-color: #8c8c8c;
}

.no-dot::after {
  display: none;
}

.app-active {
  width: 36px;
  height: 40px;
  margin: 0 4px;
  background-color: #2d2d2d;
  border-radius: 4px;
}

.app-active::after {
  left: 10px;
  width: 16px;
  background-color: #4fc3f7;
}

.tray {
  display: grid;
  grid-template-columns: 30px 32px 46px 27px 24px 24px 75px 30px;
  align-items: center;
  justify-items: center;
  margin-left: 14px;
}

.tray-lang {
  font-size: 11.500px;
  font-weight: 600;
}

.clock {
  justify-self: end;
  display: flex;
  flex-direction: column;
  align-items: flex-end;
  font-size: 11.500px;
  line-height: 17px;
}

.word-text {
  font-family: "Liberation Sans", sans-serif;
  font-size: 9px;
  font-weight: bold;
  fill: #fff;
}
```
